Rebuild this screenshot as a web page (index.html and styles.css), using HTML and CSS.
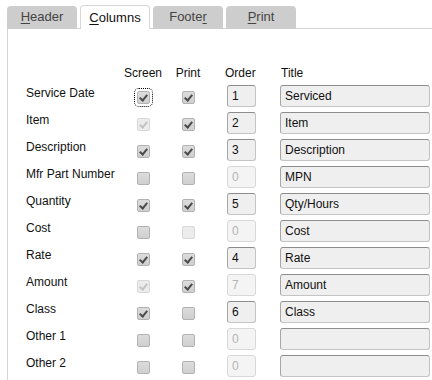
FILE: index.html
```html
<!DOCTYPE html>
<html lang="en">
<head>
  <meta charset="UTF-8">
  <title>Columns</title>
  <link rel="stylesheet" href="styles.css">
</head>
<body>
  <div class="tabs">
    <div class="tab"><u>H</u>eader</div>
    <div class="tab active"><u>C</u>olumns</div>
    <div class="tab">Foote<u>r</u></div>
    <div class="tab"><u>P</u>rint</div>
  </div>

  <div class="panel">
    <div class="grid">
      <div class="head"></div>
      <div class="head center">Screen</div>
      <div class="head center">Print</div>
      <div class="head order-head">Order</div>
      <div class="head title-head">Title</div>

      <div class="label">Service Date</div>
      <div class="cell"><span class="cb on focus"></span></div>
      <div class="cell"><span class="cb on"></span></div>
      <div class="order"><input class="field num" value="1" readonly></div>
      <div><input class="field title" value="Serviced" readonly></div>

      <div class="label">Item</div>
      <div class="cell"><span class="cb on dis"></span></div>
      <div class="cell"><span class="cb on"></span></div>
      <div class="order"><input class="field num" value="2" readonly></div>
      <div><input class="field title" value="Item" readonly></div>

      <div class="label">Description</div>
      <div class="cell"><span class="cb on"></span></div>
      <div class="cell"><span class="cb on"></span></div>
      <div class="order"><input class="field num" value="3" readonly></div>
      <div><input class="field title" value="Description" readonly></div>

      <div class="label">Mfr Part Number</div>
      <div class="cell"><span class="cb"></span></div>
      <div class="cell"><span class="cb"></span></div>
      <div class="order"><input class="field num" value="0" disabled></div>
      <div><input class="field title" value="MPN" readonly></div>

      <div class="label">Quantity</div>
      <div class="cell"><span class="cb on"></span></div>
      <div class="cell"><span class="cb on"></span></div>
      <div class="order"><input class="field num" value="5" readonly></div>
      <div><input class="field title" value="Qty/Hours" readonly></div>

      <div class="label">Cost</div>
      <div class="cell"><span class="cb"></span></div>
      <div class="cell"><span class="cb dis"></span></div>
      <div class="order"><input class="field num" value="0" disabled></div>
      <div><input class="field title" value="Cost" readonly></div>

      <div class="label">Rate</div>
      <div class="cell"><span class="cb on"></span></div>
      <div class="cell"><span class="cb on"></span></div>
      <div class="order"><input class="field num" value="4" readonly></div>
      <div><input class="field title" value="Rate" readonly></div>

      <div class="label">Amount</div>
      <div class="cell"><span class="cb on dis"></span></div>
      <div class="cell"><span class="cb on"></span></div>
      <div class="order"><input class="field num" value="7" disabled></div>
      <div><input class="field title" value="Amount" readonly></div>

      <div class="label">Class</div>
      <div class="cell"><span class="cb on"></span></div>
      <div class="cell"><span class="cb"></span></div>
      <div class="order"><input class="field num" value="6" readonly></div>
      <div><input class="field title" value="Class" readonly></div>

      <div class="label">Other 1</div>
      <div class="cell"><span class="cb"></span></div>
      <div class="cell"><span class="cb"></span></div>
      <div class="order"><input class="field num" value="0" disabled></div>
      <div><input class="field title" value="" readonly></div>

      <div class="label">Other 2</div>
      <div class="cell"><span class="cb"></span></div>
      <div class="cell"><span class="cb"></span></div>
      <div class="order"><input class="field num" value="0" disabled></div>
      <div><input class="field title" value="" readonly></div>
    </div>
  </div>
</body>
</html>
```

FILE: styles.css
```css
body {
  margin: 0;
  background: #fff;
  font-family: 'Liberation Sans', Arial, sans-serif;
  font-size: 12px;
  color: #111;
  overflow: hidden;
}
.tabs {
  display: flex;
  align-items: flex-end;
  gap: 3px;
  height: 28px;
  padding-left: 7px;
  box-sizing: border-box;
}
.tab {
  position: relative;
  z-index: 1;
  width: 70px;
  height: 23px;
  margin-bottom: -1px;
  box-sizing: border-box;
  background: #cdcdcd;
  border-radius: 4px 4px 0 0;
  font-size: 13px;
  color: #444;
  text-align: center;
  line-height: 22px;
}
.tab u {
  text-decoration-thickness: 1px;
  text-underline-offset: 2px;
}
.tab.active {
  height: 24px;
  background: #fff;
  color: #111;
  border: 1px solid #d6d6d6;
  border-bottom: none;
  line-height: 23px;
}
.panel {
  margin-left: 7px;
  border-left: 1px solid #d4d4d4;
  border-top: 1px solid #d4d4d4;
  padding: 37px 0 0 18px;
  height: 352px;
  box-sizing: border-box;
  overflow: hidden;
}
.grid {
  display: grid;
  grid-template-columns: 94px 46px 44px 70px 150px;
  grid-auto-rows: 22px;
  grid-template-rows: 14px;
  row-gap: 5px;
}
.head {
  line-height: 14px;
  margin-bottom: 2px;
  color: #111;
}
.center {
  text-align: center;
}
.order-head {
  padding-left: 15px;
}
.title-head {
  padding-left: 1px;
}
.label {
  line-height: 14px;
  align-self: start;
  padding-top: 1px;
}
.cell {
  display: flex;
  justify-content: center;
  align-items: center;
  padding-top: 2px;
}
.cb {
  position: relative;
  width: 13px;
  height: 13px;
  box-sizing: border-box;
  border: 1px solid #b2b2b2;
  border-radius: 2px;
  background: linear-gradient(#dcdcdc, #cfcfcf);
}
.cb.on::after {
  content: "";
  position: absolute;
  left: 3px;
  top: 1px;
  width: 3px;
  height: 6px;
  border-right: 2px solid #4a4a4a;
  border-bottom: 2px solid #4a4a4a;
  transform: rotate(40deg);
}
.cb.dis {
  border-color: #d8d8d8;
  background: #ececec;
}
.cb.dis.on::after {
  border-color: #c2c2c2;
}
.cb.focus {
  outline: 1px dotted #000;
  outline-offset: 2px;
}
.order {
  padding-left: 17px;
}
.field {
  display: block;
  height: 22px;
  box-sizing: border-box;
  margin: 0;
  border: 1px solid #c4c4c4;
  border-top-color: #8c8c8c;
  border-left-color: #a6a6a6;
  border-radius: 3px;
  background: #efefef;
  font-family: 'Liberation Sans', Arial, sans-serif;
  font-size: 12px;
  color: #111;
  padding: 0 4px;
  outline: none;
}
.num {
  width: 29px;
}
.title {
  width: 150px;
}
.field:disabled {
  border-color: #d8d8d8;
  background: #f4f4f4;
  color: #b4b4b4;
}
```
